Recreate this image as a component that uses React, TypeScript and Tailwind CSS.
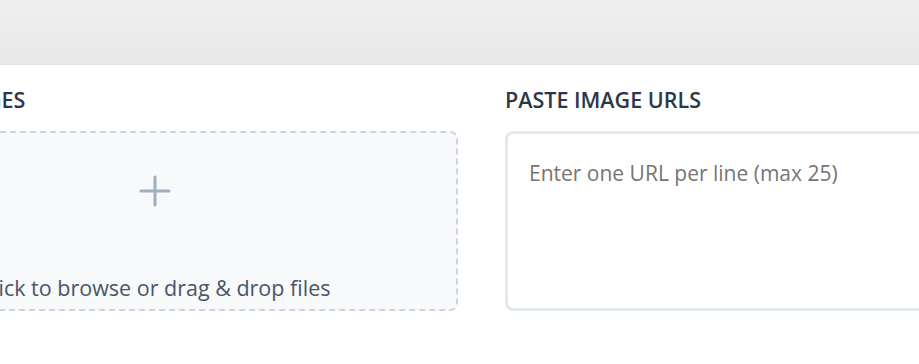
import { Plus } from 'lucide-react';

export default function App() {
  return (
    <div
      className="h-[364px] w-[919px] overflow-hidden bg-white"
      style={{ fontFamily: '"Open Sans", "Noto Sans", sans-serif' }}
    >
      <div className="h-[65px] border-b border-[#dfe6ee] bg-gradient-to-b from-[#efefef] to-[#e8e8e8]" />

      <div className="-ml-[148px] grid w-[1259px] grid-cols-2 gap-[47px] pt-[20px]">
        <div className="flex flex-col gap-[16px]">
          <h2 className="text-[21.5px] leading-[30px] font-semibold text-[#2d3748]">UPLOAD IMAGES</h2>
          <div className="flex h-[180px] flex-col items-center justify-between rounded-lg border-2 border-dashed border-[#cbd5e0] bg-[#f7f9fb] pt-[34px] pb-[5px]">
            <Plus className="h-[48px] w-[48px] text-[#a0aec0]" strokeWidth={1.5} />
            <p className="text-[21.5px] leading-[32px] text-[#4a5568]">Click to browse or drag &amp; drop files</p>
          </div>
        </div>

        <div className="flex flex-col gap-[16px]">
          <h2 className="text-[21.5px] leading-[30px] font-semibold text-[#2d3748]">PASTE IMAGE URLS</h2>
          <textarea
            className="h-[180px] resize-none rounded-lg border-[3px] border-[#e2e8f0] bg-white px-[21px] pt-[24px] pb-[20px] text-[21px] leading-[30px] text-[#2d3748] outline-none placeholder:text-[#757575]"
            placeholder="Enter one URL per line (max 25)"
          />
        </div>
      </div>
    </div>
  );
}
